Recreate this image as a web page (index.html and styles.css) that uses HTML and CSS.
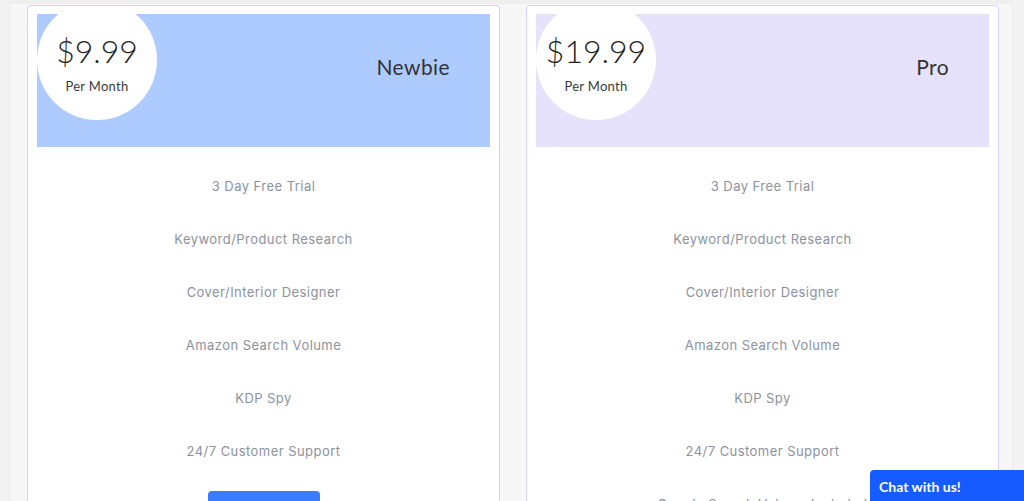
FILE: index.html
```html
<!DOCTYPE html>
<html lang="en">
<head>
<meta charset="utf-8">
<title>Pricing</title>
<link rel="stylesheet" href="styles.css">
</head>
<body>
<div class="page">
  <section class="pricing">
    <div class="card card-newbie">
      <div class="card-head">
        <div class="price-bubble">
          <div class="price">$9.99</div>
          <div class="period">Per Month</div>
        </div>
        <div class="plan-name">Newbie</div>
      </div>
      <ul class="features">
        <li>3 Day Free Trial</li>
        <li>Keyword/Product Research</li>
        <li>Cover/Interior Designer</li>
        <li>Amazon Search Volume</li>
        <li>KDP Spy</li>
        <li>24/7 Customer Support</li>
      </ul>
      <div class="cta-row"><a class="cta" href="#">Sign Up</a></div>
    </div>
    <div class="card card-pro">
      <div class="card-head">
        <div class="price-bubble">
          <div class="price">$19.99</div>
          <div class="period">Per Month</div>
        </div>
        <div class="plan-name">Pro</div>
      </div>
      <ul class="features">
        <li>3 Day Free Trial</li>
        <li>Keyword/Product Research</li>
        <li>Cover/Interior Designer</li>
        <li>Amazon Search Volume</li>
        <li>KDP Spy</li>
        <li>24/7 Customer Support</li>
        <li>Google Search Volume Included</li>
      </ul>
    </div>
  </section>
</div>
<div class="chat">Chat with us!</div>
</body>
</html>
```

FILE: styles.css
```css
html, body {
  margin: 0;
  padding: 0;
  height: 100%;
  overflow: hidden;
}
body {
  background: #f3f3f3;
  font-family: "Inter", "Liberation Sans", sans-serif;
}
.page {
  margin-left: 9px;
  width: 1004px;
  min-height: 100%;
  background: #f7f7f7;
  border-left: 1px solid #ebebeb;
  border-right: 1px solid #ebebeb;
  border-top: 4px solid #efefef;
  box-sizing: border-box;
  padding-top: 1px;
}
.pricing {
  display: flex;
  gap: 26px;
  padding-left: 17px;
}
.card {
  width: 473px;
  box-sizing: border-box;
  background: #ffffff;
  border: 1px solid #c6d6fa;
  border-radius: 4px;
  padding: 8px 9px 0 9px;
  height: 520px;
}
.card-pro {
  border-color: #d8d0fa;
}
.card-head {
  display: flex;
  justify-content: space-between;
  align-items: flex-start;
  height: 133px;
  overflow: hidden;
  background: #aecbff;
}
.card-pro .card-head {
  background: #e6e2fc;
}
.price-bubble {
  width: 120px;
  height: 120px;
  flex-shrink: 0;
  margin-top: -14px;
  border-radius: 50%;
  background: #ffffff;
  display: flex;
  flex-direction: column;
  align-items: center;
  box-sizing: border-box;
  padding-top: 33px;
  color: #222;
  font-family: "Lato", "Liberation Sans", sans-serif;
}
.price {
  font-size: 32px;
  line-height: 36px;
  font-weight: 300;
  letter-spacing: 0;
  color: #1f1f1f;
}
.period {
  margin-top: 9px;
  font-size: 13px;
  line-height: 16px;
  letter-spacing: 0.3px;
  color: #3a3a3a;
}
.plan-name {
  margin-top: 41px;
  padding-right: 40px;
  font-family: "Lato", "Liberation Sans", sans-serif;
  font-size: 21px;
  line-height: 24px;
  letter-spacing: 0.4px;
  color: #333333;
}
.features {
  list-style: none;
  margin: 0;
  padding: 13px 0 0 0;
  text-align: center;
}
.features li {
  padding: 16px 0;
  line-height: 21px;
  font-size: 13px;
  color: #8c929e;
  letter-spacing: 0.45px;
}
.cta-row {
  display: flex;
  justify-content: center;
  padding-top: 13px;
}
.cta {
  display: block;
  width: 112px;
  height: 40px;
  border-radius: 4px;
  background: #3a7cff;
  color: #fff;
  text-decoration: none;
  font-size: 14px;
  line-height: 40px;
  text-align: center;
}
.chat {
  position: fixed;
  right: 0;
  bottom: -10px;
  width: 154px;
  height: 41px;
  box-sizing: border-box;
  padding: 9px 0 0 9px;
  background: #155bff;
  border-top-left-radius: 4px;
  color: #ffffff;
  font-family: "Lato", "Liberation Sans", sans-serif;
  font-weight: 700;
  font-size: 14px;
  line-height: 16px;
}
```
